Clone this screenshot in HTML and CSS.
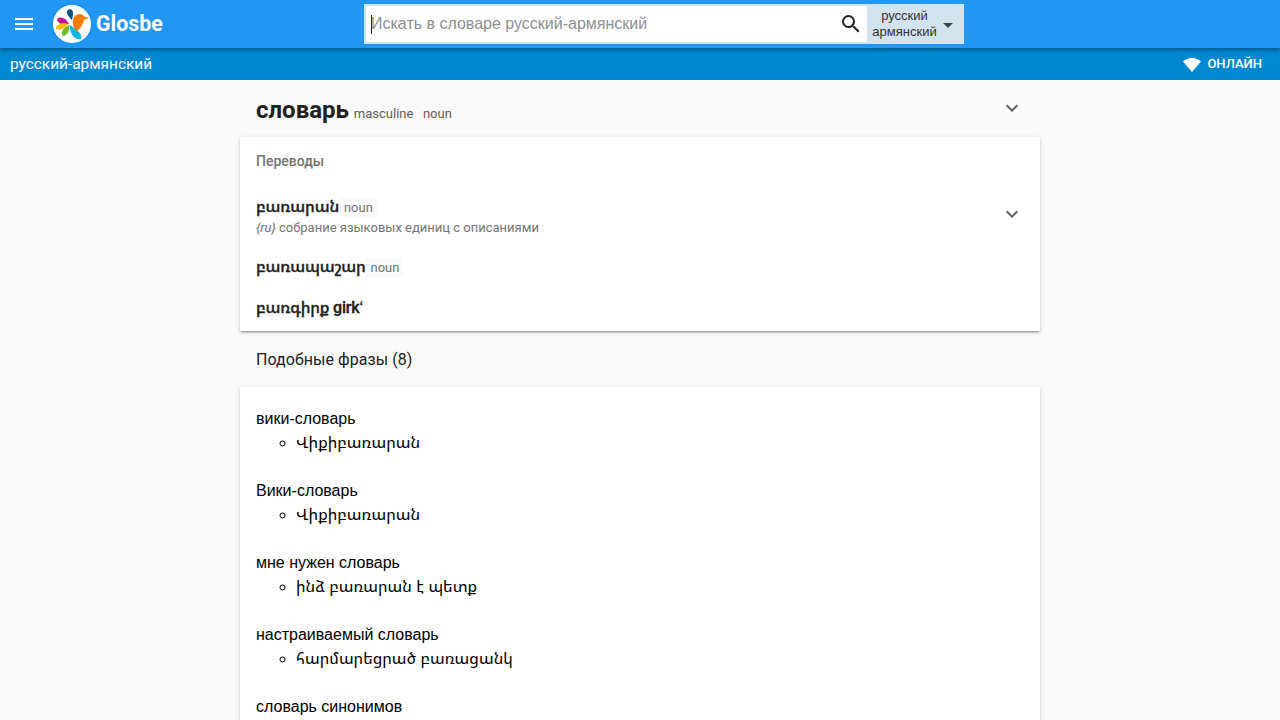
FILE: index.html
```html
<!DOCTYPE html>
<html lang="ru">
<head>
<meta charset="utf-8">
<title>словарь — русский-армянский</title>
<link rel="stylesheet" href="styles.css">
</head>
<body>
<header class="topbar">
  <div class="brand">
    <button class="menu" aria-label="menu"><svg width="24" height="24" viewBox="0 0 24 24"><path fill="#fff" d="M3 18h18v-2H3v2zm0-5h18v-2H3v2zm0-7v2h18V6H3z"/></svg></button>
    <svg class="logo" width="38" height="38" viewBox="0 0 38 38">
      <circle cx="19" cy="19" r="19" fill="#fff"/>
      <path fill="#0d4f7c" d="M14 6c2-3 6-2 6 2 0 2-.5 5-1 7-2-2-6-6-5-9z"/>
      <path fill="#c2189b" d="M4 14c4-3 9-1 12 5-5 1-11 1-12-5z"/>
      <path fill="#ffc107" d="M3 24c-1-4 6-7 12-5-2 3-7 7-12 5z"/>
      <path fill="#6abf2a" d="M10 31c-3-3 0-9 6-11 1 4-1 11-6 11z"/>
      <path fill="#12b5e5" d="M28 34c-5 2-12-5-11-14 4 3 14 9 11 14z"/>
      <path fill="#f57c00" d="M20 20c-1-6 1-11 7-11 2 0 3 1 4 2.500l5 1.500-5 2c-1 4-3 8-7 11-2-1-3-3-4-6z"/>
    </svg>
    <span class="brand-name">Glosbe</span>
  </div>
  <form class="search">
    <div class="search-field">
      <span class="caret"></span>
      <span class="placeholder">Искать в словаре русский-армянский</span>
      <svg class="search-icon" width="24" height="24" viewBox="0 0 24 24"><path fill="#212121" d="M15.5 14h-.79l-.28-.27A6.47 6.47 0 0 0 16 9.5 6.5 6.5 0 1 0 9.5 16c1.61 0 3.09-.59 4.23-1.57l.27.28v.79l5 4.99L20.49 19l-4.99-5zm-6 0C7.01 14 5 11.99 5 9.5S7.01 5 9.5 5 14 7.01 14 9.5 11.99 14 9.5 14z"/></svg>
    </div>
    <div class="lang-select">
      <span class="lang-text">русский<br>армянский</span>
      <span class="arrow"></span>
    </div>
  </form>
</header>
<div class="subbar">
  <span class="subbar-title">русский-армянский</span>
  <span class="online"><svg class="wifi" width="18" height="14" viewBox="0 0 18 14"><path fill="#fff" d="M9 14 0 3.500C1 2.600 4.400 0 9 0s8 2.600 9 3.500L9 14z"/></svg>ОНЛАЙН</span>
</div>
<main class="content">
  <div class="headword">
    <h1>словарь</h1>
    <span class="tag">masculine</span>
    <span class="tag">noun</span>
    <svg class="chevron chevron-head" width="24" height="24" viewBox="0 0 24 24"><path fill="#616161" d="M7.410 8.590 12 13.170l4.590-4.580L18 10l-6 6-6-6z"/></svg>
  </div>
  <section class="card translations">
    <h2>Переводы</h2>
    <div class="tr tr-first">
      <div class="tr-main">
        <div><strong>բառարան</strong> <span class="pos">noun</span></div>
        <div class="desc"><i>{ru}</i> собрание языковых единиц с описаниями</div>
      </div>
      <svg class="chevron" width="24" height="24" viewBox="0 0 24 24"><path fill="#616161" d="M7.410 8.590 12 13.170l4.590-4.580L18 10l-6 6-6-6z"/></svg>
    </div>
    <div class="tr tr-second"><strong>բառապաշար</strong> <span class="pos">noun</span></div>
    <div class="tr tr-third"><strong>բառգիրք girkʻ</strong></div>
  </section>
  <h3 class="phrases-title">Подобные фразы (8)</h3>
  <section class="card phrases">
    <dl>
      <dt>вики-словарь</dt><dd><ul><li>Վիքիբառարան</li></ul></dd>
      <dt>Вики-словарь</dt><dd><ul><li>Վիքիբառարան</li></ul></dd>
      <dt>мне нужен словарь</dt><dd><ul><li>ինձ բառարան է պետք</li></ul></dd>
      <dt>настраиваемый словарь</dt><dd><ul><li>հարմարեցրած բառացանկ</li></ul></dd>
      <dt>словарь синонимов</dt>
    </dl>
  </section>
</main>
</body>
</html>
```
FILE: styles.css
```css
* { box-sizing: border-box; }
html, body { margin: 0; height: 720px; overflow: hidden; }
body { background: #fafafa; color: #212121; font-family: Roboto, "Noto Sans Armenian", sans-serif; font-size: 16px; }

.topbar { position: relative; z-index: 2; height: 48px; background: #2196f3; display: flex; align-items: center; box-shadow: 0 2px 4px rgba(0,0,0,.35); }
.brand { width: 364px; display: flex; align-items: center; flex: none; }
.menu { width: 24px; height: 24px; margin-left: 12px; padding: 0; border: 0; background: none; display: flex; }
.logo { margin-left: 17px; }
.brand-name { margin-left: 5px; color: #fff; font-size: 21.33px; font-weight: 700; line-height: 48px; }

.search { width: 600px; height: 40px; display: flex; border: 2px solid #cfe4f3; border-right: 0; }
.search-field { flex: 1; background: #fff; display: flex; align-items: center; padding-left: 5px; }
.caret { width: 1px; height: 19px; background: #212121; flex: none; margin-right: -1px; }
.placeholder { flex: 1; color: #8f8f8f; font-size: 16px; font-family: "Liberation Sans", Arial, sans-serif; }
.search-icon { margin-right: 4px; }
.lang-select { width: 97px; background: #d3e3ee; display: flex; align-items: center; color: #333; margin: -2px 0; }
.lang-text { width: 74px; padding-left: 1px; font-size: 13px; line-height: 16px; text-align: center; font-family: "Liberation Sans", Arial, sans-serif; }
.arrow { width: 0; height: 0; border: 5px solid transparent; border-top: 5px solid #37474f; border-bottom: 0; margin-left: 2px; margin-top: 2px; }

.subbar { height: 32px; background: #0288d1; color: #fff; display: flex; align-items: center; justify-content: space-between; padding: 0 18px 2px 10px; }
.subbar-title { font-size: 15.4px; line-height: 20px; margin-top: 1px; }
.online { display: flex; align-items: center; font-size: 13px; font-weight: 500; gap: 6px; }
.wifi { margin-top: 3px; }

.content { width: 800px; margin: 0 auto; }
.headword { height: 57px; padding: 12px 16px 0; display: flex; align-items: baseline; position: relative; }
.headword h1 { margin: 0; font-size: 24px; font-weight: 700; line-height: 36px; color: #212121; }
.tag { margin-left: 5px; font-size: 13px; color: #616161; padding-right: 4.5px; }
.chevron { flex: none; }
.chevron-head { position: absolute; right: 16px; top: 16px; }

.card { background: #fff; box-shadow: 0 2px 2px 0 rgba(0,0,0,.14), 0 3px 1px -2px rgba(0,0,0,.2), 0 1px 5px 0 rgba(0,0,0,.12); }
.translations { height: 194px; padding: 0 16px; }
.translations h2 { margin: 0; padding-top: 16px; font-size: 14px; line-height: 16px; font-weight: 500; color: #757575; }
.tr strong { font-size: 16px; font-weight: 500; letter-spacing: -.2px; -webkit-text-stroke: .35px #212121; color: #212121; }
.pos { font-size: 13px; color: #757575; background: #fafafa; padding: 2px 4px; margin-left: -3px; }
.tr-first { display: flex; justify-content: space-between; align-items: center; margin-top: 26px; height: 40px; }
.tr-first .chevron { margin-top: -2px; }
.tr-main { line-height: 24px; }
.desc { font-size: 13px; line-height: 16px; color: #757575; }
.tr-second { margin-top: 20px; line-height: 24px; }
.tr-third { margin-top: 16px; line-height: 24px; }

.phrases-title { margin: 0; height: 56px; padding: 1px 16px 0; font-size: 16px; font-weight: 400; letter-spacing: .05px; line-height: 56px; color: #212121; }
.phrases { padding: 20px 16px 40px; font-family: "Liberation Sans", Arial, "Noto Sans Armenian", sans-serif; color: #000; }
.phrases dl { margin: 0; }
.phrases dt { font-size: 16px; line-height: 24px; }
.phrases dd { margin: 0 0 24px; }
.phrases ul { margin: 0; padding-left: 40px; list-style: circle; }
.phrases li { font-size: 16px; line-height: 24px; }
```
